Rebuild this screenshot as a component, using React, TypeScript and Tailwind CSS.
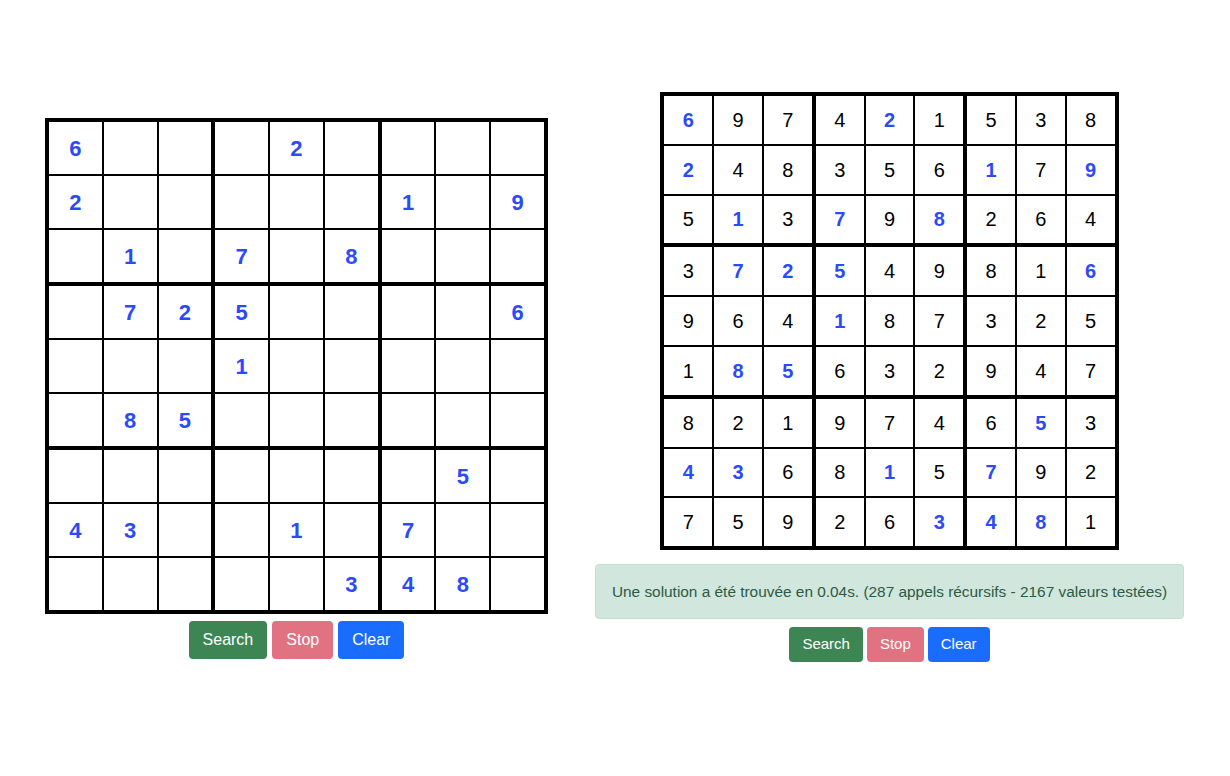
import React from "react";

const puzzle = [
  "6...2....",
  "2.....1.9",
  ".1.7.8...",
  ".725....6",
  "...1.....",
  ".85......",
  ".......5.",
  "43..1.7..",
  ".....348.",
];

const solution = [
  "697421538",
  "248356179",
  "513798264",
  "372549816",
  "964187325",
  "185632947",
  "821974653",
  "436815792",
  "759263481",
];

type BoardProps = {
  cellClass: string;
  givenClass: string;
  filledClass: string;
  showSolution: boolean;
};

function Board({ cellClass, givenClass, filledClass, showSolution }: BoardProps) {
  return (
    <div className="grid grid-cols-3 gap-[4px] bg-black p-[4px]">
      {[0, 1, 2, 3, 4, 5, 6, 7, 8].map((box) => {
        const br = Math.floor(box / 3) * 3;
        const bc = (box % 3) * 3;
        return (
          <div key={box} className="grid grid-cols-3 gap-[2px]">
            {[0, 1, 2, 3, 4, 5, 6, 7, 8].map((i) => {
              const r = br + Math.floor(i / 3);
              const c = bc + (i % 3);
              const given = puzzle[r][c] !== ".";
              const value = given ? puzzle[r][c] : showSolution ? solution[r][c] : "";
              return (
                <div
                  key={i}
                  className={`flex items-center justify-center bg-white ${cellClass} ${
                    given ? givenClass : filledClass
                  }`}
                >
                  {value}
                </div>
              );
            })}
          </div>
        );
      })}
    </div>
  );
}

function Buttons({ size }: { size: "lg" | "sm" }) {
  const base =
    size === "lg"
      ? "h-[38px] rounded-[4px] text-[16px] px-[14px]"
      : "h-[35px] rounded-[4px] text-[15px] px-[13px]";
  return (
    <div className={`flex justify-center ${size === "lg" ? "gap-[5px]" : "gap-[4px]"}`}>
      <button className={`${base} bg-[#3d8654] text-white`}>Search</button>
      <button className={`${base} bg-[#e17282] text-white`}>Stop</button>
      <button className={`${base} bg-[#1a6dfc] text-white`}>Clear</button>
    </div>
  );
}

export default function App() {
  return (
    <main
      className="flex min-h-[776px] w-[1230px] items-start bg-white px-[45px]"
      style={{ fontFamily: '"Liberation Sans", Arial, sans-serif' }}
    >
      <div className="mt-[118px] flex w-[503px] flex-col items-center gap-[7px]">
        <Board
          cellClass="h-[52px] w-[52.8px] text-[22px]"
          givenClass="font-bold text-[#2a4bf5]"
          filledClass=""
          showSolution={false}
        />
        <Buttons size="lg" />
      </div>

      <div className="ml-[47px] mt-[92px] flex w-[589px] flex-col items-center">
        <Board
          cellClass="h-[47.8px] w-[47.8px] text-[20px]"
          givenClass="font-bold text-[#2a4bf5]"
          filledClass="text-black"
          showSolution={true}
        />
        <div className="mt-[14px] flex h-[55px] w-full items-center justify-center rounded-[4px] border border-[#c3e0d2] bg-[#d1e7dd] text-[15.4px] text-[#2c5a43]">
          Une solution a été trouvée en 0.04s. (287 appels récursifs - 2167 valeurs testées)
        </div>
        <div className="mt-[8px]">
          <Buttons size="sm" />
        </div>
      </div>
    </main>
  );
}
